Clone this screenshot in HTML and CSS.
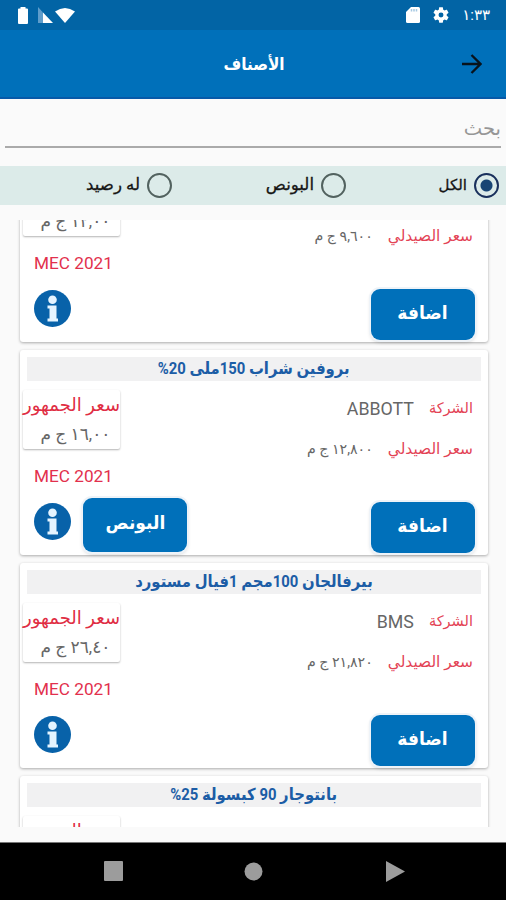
FILE: index.html
```html
<!DOCTYPE html>
<html lang="ar" dir="rtl">
<head>
<meta charset="utf-8">
<title>الأصناف</title>
<link rel="stylesheet" href="styles.css">
</head>
<body>
<header>
  <div class="status">
    <span class="clock">١:٣٣</span>
    <svg class="gear" width="16" height="16" viewBox="2 2 20 20"><path fill="#fff" d="M19.14 12.94c.04-.3.06-.61.06-.94 0-.32-.02-.64-.07-.94l2.03-1.58c.18-.14.23-.41.12-.61l-1.92-3.32c-.12-.22-.37-.29-.59-.22l-2.39.96c-.5-.38-1.03-.7-1.62-.94l-.36-2.54c-.04-.24-.24-.41-.48-.41h-3.84c-.24 0-.43.17-.47.41l-.36 2.54c-.59.24-1.13.57-1.62.94l-2.39-.96c-.22-.08-.47 0-.59.22L2.74 8.87c-.12.21-.08.47.12.61l2.03 1.58c-.05.3-.09.63-.09.94s.02.64.07.94l-2.03 1.58c-.18.14-.23.41-.12.61l1.92 3.32c.12.22.37.29.59.22l2.39-.96c.5.38 1.03.7 1.62.94l.36 2.54c.05.24.24.41.48.41h3.84c.24 0 .44-.17.47-.41l.36-2.54c.59-.24 1.13-.56 1.62-.94l2.39.96c.22.08.47 0 .59-.22l1.92-3.32c.12-.22.07-.47-.12-.61l-2.01-1.58zM12 15.1A3.1 3.1 0 1 1 12 8.9a3.1 3.1 0 0 1 0 6.2z"/></svg>
    <svg class="sd" width="14" height="16" viewBox="0 0 14 16"><path fill="#fff" d="M5 0h7.500q1.500 0 1.500 1.500v13q0 1.500-1.500 1.500h-11Q0 16 0 14.500V5z"/><path stroke="#a5c8e2" stroke-width="1.500" d="M5.500 2v2.500M8 2v2.500M10.500 2v2.500"/></svg>
    <span class="space"></span>
    <svg class="wifi" width="20" height="15" viewBox="0 0 20 15"><path fill="#fff" d="M0 3.500Q10-3.500 20 3.500L10 15z"/></svg>
    <svg class="signal" width="15" height="16" viewBox="0 0 15 16"><path fill="#5f9dcb" d="M0 0l5 5.500V16H0z"/><path fill="#fff" d="M5 5.500L15 16H5z"/></svg>
    <svg class="battery" width="10" height="17" viewBox="0 0 10 17"><path fill="#fff" d="M2.500 0h5v1.500h1.500q1 0 1 1V16q0 1-1 1H1q-1 0-1-1V2.500q0-1 1-1h1.500z"/></svg>
  </div>
  <div class="toolbar">
    <svg class="back" width="20" height="20" viewBox="0 0 20 20"><path fill="none" stroke="#08131c" stroke-width="2.300" d="M0 10h18M9.500 1l9 9-9 9"/></svg>
    <h1>الأصناف</h1>
  </div>
</header>
<div class="search"><span>بحث</span></div>
<div class="filters">
  <label class="f-all"><i class="radio on"></i><span>الكل</span></label>
  <label class="f-bonus"><i class="radio"></i><span>البونص</span></label>
  <label class="f-stock"><i class="radio"></i><span>له رصيد</span></label>
</div>
<main id="list"></main>
<nav>
  <svg width="19" height="21" viewBox="0 0 19 21"><path fill="#9c9c9c" d="M0 0l19 10.500L0 21z"/></svg>
  <svg class="home" width="19" height="19" viewBox="0 0 19 19"><circle cx="9.500" cy="9.500" r="9" fill="#9c9c9c"/></svg>
  <svg width="20" height="20" viewBox="0 0 20 20"><rect width="19" height="20" rx="1" fill="#9c9c9c"/></svg>
</nav>
<script src="app.js"></script>
</body>
</html>
```
FILE: styles.css
```css
* { box-sizing: border-box; }
body { margin: 0; width: 506px; height: 900px; overflow: hidden; display: flex; flex-direction: column; background: #fafafa; font-family: Roboto, "DejaVu Sans", sans-serif; color: #666; }
header { height: 99px; flex: none; background: #0070ba; border-bottom: 2px solid #0759a8; color: #fff; }
.status { height: 30px; background: #0264a5; display: flex; align-items: center; padding: 0 16px 0 18px; }
.clock { width: 27px; font-size: 15px; line-height: 28px; white-space: nowrap; }
.gear { margin-right: 14px; }
.sd { margin-right: 13px; }
.space { flex: 1; }
.signal { margin-right: 2px; }
.battery { margin-right: 10px; }
.toolbar { height: 67px; display: grid; grid-template-columns: 1fr auto 1fr; align-items: center; padding: 0 24px 0 25px; }
.back { margin-top: 1px; }
h1 { margin: 0; font-size: 17px; line-height: 30px; font-weight: 700; transform: scaleX(.9); }
.search { height: 49px; flex: none; margin: 0 5px; border-bottom: 2px solid #aaa; display: flex; align-items: center; font-size: 19.500px; line-height: 30px; color: #969696; padding-top: 12px; }
.filters { margin-top: 18px; height: 39px; flex: none; background: #dcebe9; display: flex; align-items: center; color: #151515; font-size: 16.600px; line-height: 28px; padding-right: 7px; -webkit-text-stroke: .3px #151515; }
.filters label { display: flex; align-items: center; gap: 7px; white-space: nowrap; }
.filters span { margin-top: -2px; }
.f-all { width: 153px; font-size: 15px; }
.f-bonus { width: 174px; }
.radio { width: 25px; height: 25px; flex: none; border: 2px solid #52625f; border-radius: 50%; }
.radio.on { border-color: #19305c; background: radial-gradient(circle, #174474 0 5.500px, transparent 6.500px); }
main { margin-top: 15px; height: 607px; flex: none; overflow: hidden; padding: 0 16px 0 18px; }
.card { height: 205px; margin: 0 2px 8px; background: #fff; border-radius: 3px; box-shadow: 0 1px 3px rgba(0,0,0,.32); padding-top: 7px; }
.card:first-child { margin-top: -83px; }
.title { height: 24px; margin: 0 7px; background: #f1f1f2; color: #1c5da6; font-size: 16.500px; line-height: 24px; font-weight: 700; text-align: center; white-space: nowrap; }
.title span { display: inline-block; transform: scaleX(.9); }
.body { display: flex; justify-content: space-between; }
.details { width: 250px; padding: 8px 13px 0 0; }
.row { height: 40px; display: flex; align-items: center; padding-right: 2px; gap: 15px; white-space: nowrap; line-height: 28px; }
.label { font-size: 15.400px; color: #e34355; }
.row:first-child .label { font-size: 14.500px; }
.company { font-size: 17.800px; }
.price { font-size: 14.200px; }
.btn { display: flex; align-items: center; justify-content: center; width: 104px; height: 51px; border-radius: 9px; background: #0070ba; color: #fff; font-size: 18px; line-height: 32px; font-weight: 700; box-shadow: 0 0 0 2px #eef3f8, 0 2px 4px rgba(0,0,0,.2); white-space: nowrap; padding-bottom: 4px; }
.btn span { transform: scaleX(.95); }
.details .btn { margin-top: 33px; }
.public { width: 200px; display: flex; flex-direction: column; align-items: flex-end; padding-top: 9px; }
.box { width: 97px; height: 59px; margin-left: 3px; background: #fff; border-radius: 2px; box-shadow: 0 1px 2px rgba(0,0,0,.3); text-align: center; white-space: nowrap; }
.box-label { height: 29px; line-height: 29px; font-size: 18px; color: #e02d43; display: flex; justify-content: center; }
.box-price { height: 29px; line-height: 30px; font-size: 17px; display: flex; justify-content: center; padding-left: 8px; }
.mec { margin: 17px 0 0 14px; font-size: 17.200px; line-height: 20px; color: #e2304d; direction: ltr; }
.actions { display: flex; align-items: center; justify-content: flex-end; height: 54px; margin-top: 12px; padding-left: 14px; }
.actions .btn { height: 54px; margin-left: 12px; }
.info { margin-top: -8px; }
nav { height: 58px; margin-top: auto; flex: none; background: #000; border-top: 1px solid #777; display: flex; align-items: center; justify-content: space-between; padding: 0 101px 1px 104px; }
.home { margin-right: 3px; }
```
FILE: app.js
```js
const items = [
  { name: "بروفين اقراص", company: "ABBOTT", retail: "١٢,٠٠ ج م", price: "٩,٦٠٠ ج م" },
  { name: "بروفين شراب 150ملى 20%", company: "ABBOTT", retail: "١٦,٠٠ ج م", price: "١٢,٨٠٠ ج م", bonus: true },
  { name: "بيرفالجان 100مجم 1فيال مستورد", company: "BMS", retail: "٢٦,٤٠ ج م", price: "٢١,٨٢٠ ج م" },
  { name: "بانتوجار 90 كبسولة 25%", company: "", retail: "", price: "" }
];
const info = `<svg class="info" width="37" height="37" viewBox="0 0 37 37"><circle cx="18.500" cy="18.500" r="18.500" fill="#0862a9"/><circle cx="18.500" cy="9.800" r="4.300" fill="#e4f4ff"/><path fill="#e4f4ff" d="M13.500 15.500H22.500V28.500H24V31.500H13.500V28.500H15.500V18.500H13.500z"/></svg>`;
document.getElementById("list").innerHTML = items.map(i => `
<article class="card">
  <div class="title"><span>${i.name}</span></div>
  <div class="body">
    <div class="details">
      <div class="row"><span class="label">الشركة</span><span class="company">${i.company}</span></div>
      <div class="row"><span class="label">سعر الصيدلي</span><span class="price">${i.price}</span></div>
      <div class="btn"><span>اضافة</span></div>
    </div>
    <div class="public">
      <div class="box"><div class="box-label"><span>سعر الجمهور</span></div><div class="box-price"><span>${i.retail}</span></div></div>
      <div class="mec">MEC 2021</div>
      <div class="actions">${i.bonus ? '<div class="btn"><span>البونص</span></div>' : ""}${info}</div>
    </div>
  </div>
</article>`).join("");
```
